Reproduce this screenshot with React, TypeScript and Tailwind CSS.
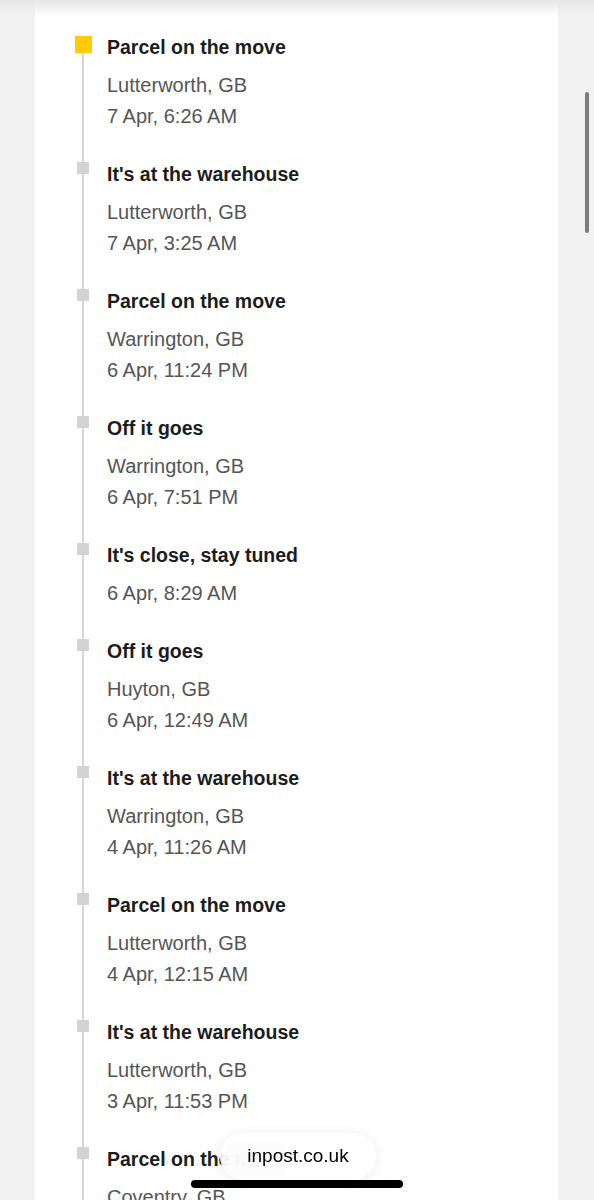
import React from 'react';

interface TrackingEvent {
  title: string;
  place?: string;
  time: string;
}

const events: TrackingEvent[] = [
  { title: 'Parcel on the move', place: 'Lutterworth, GB', time: '7 Apr, 6:26 AM' },
  { title: "It's at the warehouse", place: 'Lutterworth, GB', time: '7 Apr, 3:25 AM' },
  { title: 'Parcel on the move', place: 'Warrington, GB', time: '6 Apr, 11:24 PM' },
  { title: 'Off it goes', place: 'Warrington, GB', time: '6 Apr, 7:51 PM' },
  { title: "It's close, stay tuned", time: '6 Apr, 8:29 AM' },
  { title: 'Off it goes', place: 'Huyton, GB', time: '6 Apr, 12:49 AM' },
  { title: "It's at the warehouse", place: 'Warrington, GB', time: '4 Apr, 11:26 AM' },
  { title: 'Parcel on the move', place: 'Lutterworth, GB', time: '4 Apr, 12:15 AM' },
  { title: "It's at the warehouse", place: 'Lutterworth, GB', time: '3 Apr, 11:53 PM' },
  { title: 'Parcel on the move', place: 'Coventry, GB', time: '3 Apr, 9:02 PM' }
];

const TimelineItem: React.FC<{ event: TrackingEvent; first: boolean }> = ({ event, first }) => {
  return (
    <div className="grid grid-cols-[18px_1fr] gap-x-[15px] pl-[39px]">
      {/* Marker column */}
      <div className="flex flex-col items-center">
        {first ? (
          <>
            <div className="h-[5px]" />
            <div className="h-[17px] w-[17px] bg-[#ffcc00] shrink-0" />
          </>
        ) : (
          <>
            <div className="h-[4px] w-[2px] bg-[#d6d6d6]" />
            <div className="h-[12px] w-[12px] bg-[#d3d3d3] shrink-0" />
          </>
        )}
        <div className="w-[2px] flex-1 bg-[#d6d6d6]" />
      </div>

      {/* Text */}
      <div className="pb-[26px]">
        <p className="text-[19.5px] leading-[32px] font-bold text-[#1c1c1c]">{event.title}</p>
        <div className="mt-[7px] text-[20px] leading-[31px] text-[#555555]">
          {event.place && <p>{event.place}</p>}
          <p>{event.time}</p>
        </div>
      </div>
    </div>
  );
};

export default function App() {
  return (
    <div
      className="relative h-[1200px] overflow-hidden bg-[#f2f2f2]"
      style={{ fontFamily: '"Liberation Sans", Arial, sans-serif' }}
    >
      <div className="ml-[35px] w-[523px] bg-white pt-[31px]">
        {events.map((event, i) => (
          <TimelineItem key={i} event={event} first={i === 0} />
        ))}
      </div>

      {/* top shadow from sticky header */}
      <div className="pointer-events-none absolute left-0 right-0 top-0 h-[16px] bg-gradient-to-b from-[#e6e6e6] to-transparent" />

      {/* scrollbar */}
      <div className="absolute left-[585px] top-[92px] h-[141px] w-[4px] rounded-full bg-[#7d7d7d]" />

      {/* browser address pill */}
      <div className="absolute left-[220px] top-[1133px] flex h-[47px] w-[156px] items-center justify-center rounded-full bg-white/85 shadow-[0_2px_14px_rgba(0,0,0,0.08)] backdrop-blur-md">
        <span className="text-[19px] text-black">inpost.co.uk</span>
      </div>

      {/* home indicator */}
      <div className="absolute left-[191px] top-[1180px] h-[8px] w-[212px] rounded-full bg-black" />
    </div>
  );
}
